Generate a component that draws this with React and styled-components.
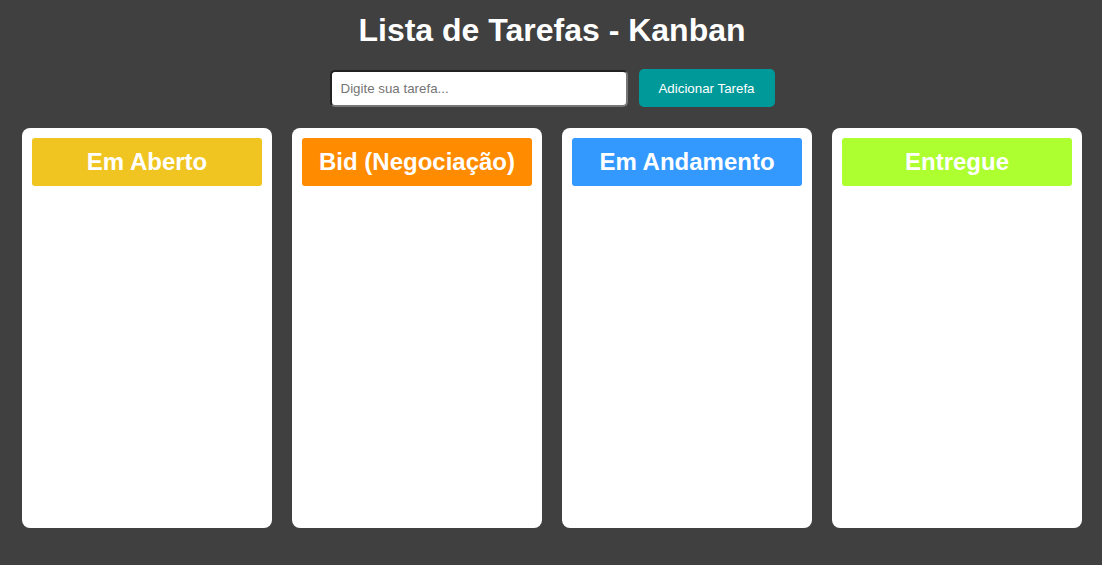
import React from "react";
import styled, { createGlobalStyle } from "styled-components";

const GlobalStyle = createGlobalStyle`
  body {
    margin: 0;
    background-color: #404040;
    font-family: "Liberation Sans", Arial, sans-serif;
  }
`;

const columns = [
  { title: "Em Aberto", color: "#f0c521" },
  { title: "Bid (Negociação)", color: "#ff8c00" },
  { title: "Em Andamento", color: "#3399ff" },
  { title: "Entregue", color: "#adff2f" },
];

const App = () => {
  return (
    <>
      <GlobalStyle />
      <Page>
        <Title>Lista de Tarefas - Kanban</Title>
        <Form onSubmit={(e) => e.preventDefault()}>
          <TaskInput type="text" placeholder="Digite sua tarefa..." />
          <AddButton type="submit">Adicionar Tarefa</AddButton>
        </Form>
        <Board>
          {columns.map((col) => (
            <Column key={col.title}>
              <ColumnHeader $color={col.color}>{col.title}</ColumnHeader>
            </Column>
          ))}
        </Board>
      </Page>
    </>
  );
};

const Page = styled.div`
  padding: 12px 20px 37px 22px;
  color: #fff;
`;

const Title = styled.h1`
  margin: 0 0 20px;
  text-align: center;
  font-size: 32px;
  line-height: 37px;
  font-weight: bold;
  color: #fff;
`;

const Form = styled.form`
  display: flex;
  justify-content: center;
  align-items: center;
  gap: 11px;
  margin-bottom: 21px;
`;

const TaskInput = styled.input`
  box-sizing: border-box;
  width: 298px;
  height: 37px;
  padding: 0 9px;
  border: 2px inset #767676;
  border-radius: 5px;
  background: #fff;
  font-family: "Liberation Sans", Arial, sans-serif;
  font-size: 13.333px;
  color: #222;

  &::placeholder {
    color: #757575;
  }
`;

const AddButton = styled.button`
  box-sizing: border-box;
  width: 136px;
  height: 38px;
  padding: 0;
  border: none;
  border-radius: 5px;
  background-color: #009999;
  color: #fff;
  font-family: "Liberation Sans", Arial, sans-serif;
  font-size: 13.333px;
  cursor: pointer;
`;

const Board = styled.div`
  display: flex;
  justify-content: center;
  gap: 20px;
`;

const Column = styled.div`
  box-sizing: border-box;
  width: 250px;
  height: 400px;
  padding: 10px;
  background: #fff;
  border-radius: 8px;
`;

const ColumnHeader = styled.h2`
  margin: 0;
  padding: 10px;
  border-radius: 3px;
  background-color: ${(p) => p.$color};
  color: #fff;
  text-align: center;
  font-size: 24px;
  line-height: 28px;
  font-weight: bold;
`;

export default App;
